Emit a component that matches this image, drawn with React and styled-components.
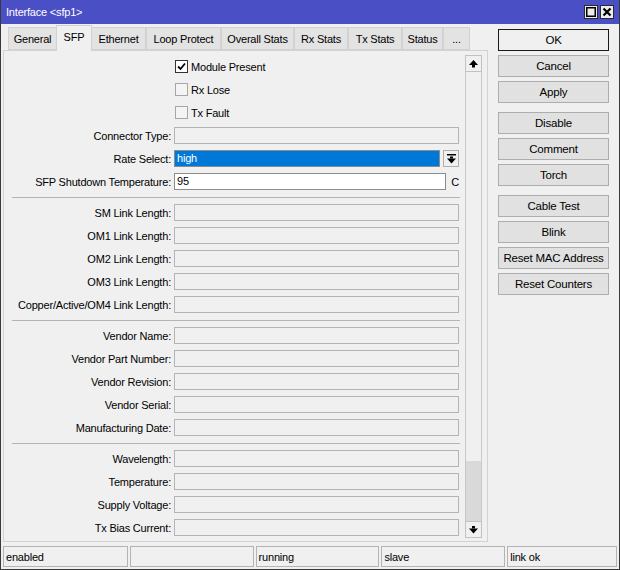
import React from 'react'
import styled, { createGlobalStyle } from 'styled-components'

const GlobalStyle = createGlobalStyle`
  body {
    margin: 0;
    background: #f0f0f0;
    font-family: "Liberation Sans", Arial, sans-serif;
    font-size: 11px;
    letter-spacing: -0.2px;
    color: #000;
  }
`

const tabs = [
  { name: 'General', w: 49 },
  { name: 'SFP', w: 36, active: true },
  { name: 'Ethernet', w: 55 },
  { name: 'Loop Protect', w: 75 },
  { name: 'Overall Stats', w: 73 },
  { name: 'Rx Stats', w: 54 },
  { name: 'Tx Stats', w: 54 },
  { name: 'Status', w: 41 },
  { name: '...', w: 27 },
]

const sections = [
  ['SM Link Length', 'OM1 Link Length', 'OM2 Link Length', 'OM3 Link Length', 'Copper/Active/OM4 Link Length'],
  ['Vendor Name', 'Vendor Part Number', 'Vendor Revision', 'Vendor Serial', 'Manufacturing Date'],
  ['Wavelength', 'Temperature', 'Supply Voltage', 'Tx Bias Current'],
]

const buttonGroups = [
  ['OK', 'Cancel', 'Apply'],
  ['Disable', 'Comment', 'Torch'],
  ['Cable Test', 'Blink', 'Reset MAC Address', 'Reset Counters'],
]

const statusCells = [
  { text: 'enabled', w: 125 },
  { text: '', w: 124 },
  { text: 'running', w: 124 },
  { text: 'slave', w: 124 },
  { text: 'link ok', w: 110 },
]

function Check({ checked }) {
  return (
    <CheckBox checked={checked}>
      {checked && (
        <svg width="9" height="9" viewBox="0 0 9 9">
          <path d="M1 4.5 L3.5 7 L8 1.5" fill="none" stroke="#000" strokeWidth="1.8" />
        </svg>
      )}
    </CheckBox>
  )
}

function ArrowUp() {
  return (
    <svg width="9" height="8" viewBox="0 0 9 8">
      <polygon points="4.5,0 9,5 0,5" fill="#000" />
      <rect x="3" y="5" width="3" height="2.5" fill="#000" />
    </svg>
  )
}

function ArrowDown() {
  return (
    <svg width="9" height="8" viewBox="0 0 9 8">
      <rect x="3" y="0" width="3" height="2.5" fill="#000" />
      <polygon points="0,2.5 9,2.5 4.5,7.5" fill="#000" />
    </svg>
  )
}

function DropArrow() {
  return (
    <svg width="9" height="10" viewBox="0 0 9 10">
      <rect x="0" y="0" width="9" height="1.5" fill="#000" />
      <rect x="3" y="2.5" width="3" height="2" fill="#000" />
      <polygon points="0,4.5 9,4.5 4.5,9.5" fill="#000" />
    </svg>
  )
}

export default function App() {
  return (
    <>
      <GlobalStyle />
      <Window>
        <TitleBar>
          <span>Interface &lt;sfp1&gt;</span>
          <TitleButtons>
            <TitleButton>
              <svg width="10" height="10" viewBox="0 0 10 10">
                <rect x="0.75" y="0.75" width="8.5" height="8.5" fill="none" stroke="#000" strokeWidth="1.5" />
              </svg>
            </TitleButton>
            <TitleButton>
              <svg width="10" height="10" viewBox="0 0 10 10">
                <path d="M1.5 1.5 L8.5 8.5 M8.5 1.5 L1.5 8.5" stroke="#000" strokeWidth="2.2" />
              </svg>
            </TitleButton>
          </TitleButtons>
        </TitleBar>

        <Main>
          <LeftColumn>
            <TabStrip>
              {tabs.map((t) => (
                <Tab key={t.name} w={t.w} active={t.active}>{t.name}</Tab>
              ))}
            </TabStrip>
            <Panel>
              <Form>
                <Row>
                  <span />
                  <CheckField><Check checked /> Module Present</CheckField>
                </Row>
                <Row>
                  <span />
                  <CheckField><Check /> Rx Lose</CheckField>
                </Row>
                <Row>
                  <span />
                  <CheckField><Check /> Tx Fault</CheckField>
                </Row>
                <Row>
                  <Label>Connector Type:</Label>
                  <Field />
                </Row>
                <Row>
                  <Label>Rate Select:</Label>
                  <FieldLine>
                    <Select>high</Select>
                    <DropButton><DropArrow /></DropButton>
                  </FieldLine>
                </Row>
                <Row>
                  <Label>SFP Shutdown Temperature:</Label>
                  <FieldLine>
                    <Field editable width={273}>95</Field>
                    <Unit>C</Unit>
                  </FieldLine>
                </Row>
                {sections.map((rows, i) => (
                  <React.Fragment key={i}>
                    <Separator />
                    {rows.map((r) => (
                      <Row key={r}>
                        <Label>{r}:</Label>
                        <Field />
                      </Row>
                    ))}
                  </React.Fragment>
                ))}
              </Form>
              <ScrollBar>
                <ScrollButton><ArrowUp /></ScrollButton>
                <ScrollTrack>
                  <ScrollThumb />
                </ScrollTrack>
                <ScrollButton><ArrowDown /></ScrollButton>
              </ScrollBar>
            </Panel>
          </LeftColumn>

          <ButtonColumn>
            {buttonGroups.map((g, i) => (
              <ButtonGroup key={i}>
                {g.map((b) => (
                  <Button key={b} primary={b === 'OK'}>{b}</Button>
                ))}
              </ButtonGroup>
            ))}
          </ButtonColumn>
        </Main>

        <StatusBar>
          {statusCells.map((c, i) => (
            <StatusCell key={i} w={c.w}>{c.text}</StatusCell>
          ))}
        </StatusBar>
      </Window>
    </>
  )
}

const Window = styled.div`
  width: 620px;
  height: 570px;
  box-sizing: border-box;
  border: 1px solid #3a3a3a;
  border-top: none;
  display: flex;
  flex-direction: column;
  background: #f0f0f0;
  overflow: hidden;
`

const TitleBar = styled.div`
  height: 24px;
  flex-shrink: 0;
  margin: 0 -1px;
  background: #4b4fc6;
  color: #fff;
  display: flex;
  align-items: center;
  justify-content: space-between;
  padding: 0 6px 0 6px;
`

const TitleButtons = styled.div`
  display: flex;
  gap: 2px;
`

const TitleButton = styled.div`
  width: 14px;
  height: 14px;
  box-sizing: border-box;
  border: 1px solid #2a2a2a;
  background: #ececec;
  display: flex;
  align-items: center;
  justify-content: center;
`

const Main = styled.div`
  flex: 1;
  display: flex;
  min-height: 0;
`

const LeftColumn = styled.div`
  width: 487px;
  padding-left: 2px;
  box-sizing: border-box;
  display: flex;
  flex-direction: column;
`

const TabStrip = styled.div`
  height: 26px;
  margin-top: 1px;
  margin-bottom: -1px;
  padding-left: 5px;
  display: flex;
  align-items: flex-end;
  position: relative;
  z-index: 1;
`

const Tab = styled.div`
  width: ${(p) => p.w}px;
  height: ${(p) => (p.active ? 26 : 23)}px;
  box-sizing: border-box;
  margin-bottom: ${(p) => (p.active ? 0 : 1)}px;
  margin-left: ${(p) => (p.active ? -1 : 0)}px;
  margin-right: ${(p) => (p.active ? -1 : 0)}px;
  border: 1px solid #d2d2d2;
  border-bottom: ${(p) => (p.active ? 'none' : '1px solid #d2d2d2')};
  background: ${(p) => (p.active ? '#f0f0f0' : '#e3e3e3')};
  display: flex;
  align-items: center;
  justify-content: center;
  padding-bottom: ${(p) => (p.active ? 4 : 0)}px;
`

const Panel = styled.div`
  height: 492px;
  box-sizing: border-box;
  border: 1px solid #d2d2d2;
  display: flex;
  overflow: hidden;
`

const Form = styled.div`
  flex: 1;
  padding-top: 4px;
  display: flex;
  flex-direction: column;
`

const Row = styled.div`
  height: 23px;
  flex-shrink: 0;
  display: grid;
  grid-template-columns: 167px 285px;
  column-gap: 3px;
  align-items: center;
`

const Label = styled.div`
  text-align: right;
  white-space: nowrap;
`

const Field = styled.div`
  width: ${(p) => p.width || 285}px;
  height: 17px;
  box-sizing: border-box;
  border: 1px solid ${(p) => (p.editable ? '#8c8c8c' : '#b4b4b4')};
  background: ${(p) => (p.editable ? '#fff' : '#f0f0f0')};
  padding-left: 2px;
  line-height: 15px;
`

const FieldLine = styled.div`
  display: flex;
  align-items: center;
`

const Select = styled.div`
  width: 266px;
  height: 17px;
  box-sizing: border-box;
  border: 1px solid #8c8c8c;
  background: #0078d7;
  color: #fff;
  padding-left: 2px;
  line-height: 15px;
`

const DropButton = styled.div`
  width: 16px;
  height: 17px;
  margin-left: 3px;
  box-sizing: border-box;
  border: 1px solid #adadad;
  background: #f0f0f0;
  display: flex;
  align-items: center;
  justify-content: center;
`

const Unit = styled.span`
  margin-left: 5px;
`

const CheckField = styled.div`
  display: flex;
  align-items: center;
  gap: 3px;
  margin-left: 1px;
`

const CheckBox = styled.div`
  width: 13px;
  height: 13px;
  box-sizing: border-box;
  border: 1px solid ${(p) => (p.checked ? '#333' : '#a6a6a6')};
  background: ${(p) => (p.checked ? '#fff' : '#f4f4f4')};
  display: flex;
  align-items: center;
  justify-content: center;
`

const Separator = styled.div`
  height: 8px;
  flex-shrink: 0;
  margin: 0 5px 0 8px;
  display: flex;
  align-items: center;

  &::after {
    content: '';
    flex: 1;
    border-top: 1px solid #b4b4b4;
  }
`

const ScrollBar = styled.div`
  width: 17px;
  margin: 4px 5px 3px 0;
  display: flex;
  flex-direction: column;
  box-sizing: border-box;
`

const ScrollButton = styled.div`
  height: 17px;
  flex-shrink: 0;
  box-sizing: border-box;
  border: 1px solid #c2c2c2;
  background: #f0f0f0;
  display: flex;
  align-items: center;
  justify-content: center;
`

const ScrollTrack = styled.div`
  flex: 1;
  border-left: 1px solid #c8c8c8;
  border-right: 1px solid #c8c8c8;
  background: #f0f0f0;
  display: flex;
  flex-direction: column;
  justify-content: flex-end;
`

const ScrollThumb = styled.div`
  height: 60px;
  background: #d9d9d9;
`

const ButtonColumn = styled.div`
  width: 111px;
  margin-left: 10px;
  padding-top: 5px;
  display: flex;
  flex-direction: column;
  gap: 9px;
`

const ButtonGroup = styled.div`
  display: flex;
  flex-direction: column;
  gap: 4px;
`

const Button = styled.div`
  height: 22px;
  box-sizing: border-box;
  border: 1px solid ${(p) => (p.primary ? '#1a1a1a' : '#adadad')};
  background: ${(p) => (p.primary ? '#f0f0f0' : '#e1e1e1')};
  display: flex;
  align-items: center;
  justify-content: center;
  font-size: 11.5px;
`

const StatusBar = styled.div`
  flex-shrink: 0;
  height: 24px;
  box-sizing: border-box;
  padding: 1px 2px 2px 2px;
  display: flex;
  gap: 2px;
`

const StatusCell = styled.div`
  width: ${(p) => p.w}px;
  box-sizing: border-box;
  border: 1px solid #b4b4b4;
  padding-left: 2px;
  display: flex;
  align-items: center;
`
